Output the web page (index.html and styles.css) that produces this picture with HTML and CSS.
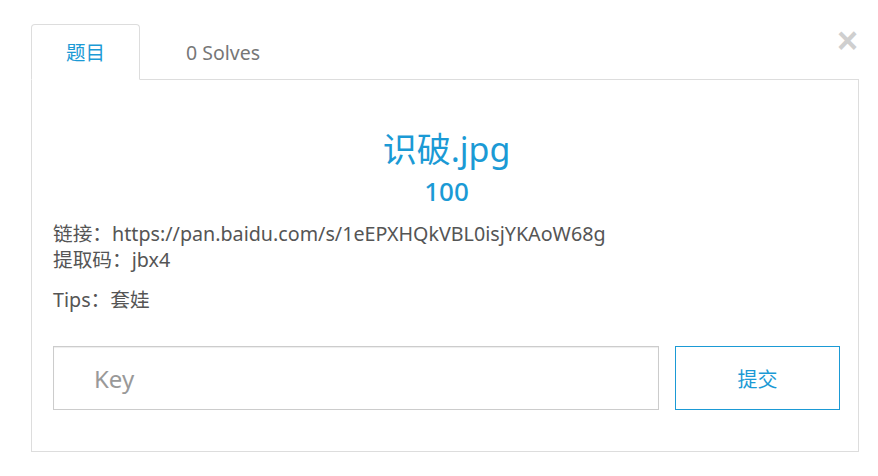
FILE: index.html
```html
<!DOCTYPE html>
<html lang="zh-CN">
<head>
    <meta charset="UTF-8">
    <title>识破.jpg</title>
    <link rel="stylesheet" href="styles.css">
</head>
<body>
    <div class="modal">
        <button class="close" type="button">&times;</button>

        <ul class="tabs">
            <li class="tab active">题目</li>
            <li class="tab">0 Solves</li>
        </ul>

        <div class="panel">
            <h2 class="chal-name">识破.jpg</h2>
            <h3 class="chal-value">100</h3>

            <div class="chal-desc">
                <p>链接：https://pan.baidu.com/s/1eEPXHQkVBL0isjYKAoW68g<br>提取码：jbx4</p>
                <p>Tips：套娃</p>
            </div>

            <div class="submit-row">
                <input class="key-input" type="text" placeholder="Key">
                <button class="submit-btn" type="button">提交</button>
            </div>
        </div>
    </div>
</body>
</html>
```

FILE: styles.css
```css
* {
    margin: 0;
    padding: 0;
    box-sizing: border-box;
}

body {
    font-family: "Noto Sans", "Noto Sans CJK SC", sans-serif;
    background-color: #fff;
    color: #555;
}

.modal {
    position: relative;
    width: 878px;
    padding: 24px 19px 0 31px;
}

.close {
    position: absolute;
    top: 23px;
    right: 20px;
    border: none;
    background: none;
    color: #cfcfcf;
    font-size: 36px;
    font-weight: bold;
    line-height: 1;
    font-family: "Liberation Sans", sans-serif;
    cursor: pointer;
}

.tabs {
    list-style: none;
    display: flex;
    margin-bottom: -1px;
}

.tab {
    height: 56px;
    padding: 0 34px;
    font-size: 19.5px;
    line-height: 56px;
    color: #777;
    border: 1px solid transparent;
    border-radius: 4px 4px 0 0;
}

.tab + .tab {
    padding-left: 45px;
}

.tab.active {
    color: #1b9ad5;
    background-color: #fff;
    border-color: #ddd #ddd #fff;
    position: relative;
}

.panel {
    height: 373px;
    border: 1px solid #ddd;
    padding: 46px 18px 0 21px;
}

.chal-name {
    font-size: 34px;
    font-weight: normal;
    color: #1b9ad5;
    text-align: center;
    line-height: 46px;
}

.chal-value {
    font-size: 26px;
    font-weight: 500;
    color: #1b9ad5;
    text-align: center;
    line-height: 34px;
    margin-top: 2px;
    margin-bottom: 13px;
}

.chal-desc p {
    font-size: 19.7px;
    line-height: 26px;
    color: #555;
    margin-bottom: 14px;
}

.submit-row {
    display: flex;
    gap: 16px;
    margin-top: 33px;
}

.key-input {
    width: 606px;
    height: 64px;
    border: 1px solid #ccc;
    box-shadow: inset 0 1px 1px rgba(0, 0, 0, 0.075);
    padding: 0 40px;
    font-size: 24px;
    font-family: "Noto Sans", sans-serif;
    color: #555;
    outline: none;
}

.key-input::placeholder {
    color: #999;
}

.submit-btn {
    width: 165px;
    height: 64px;
    border: 1px solid #1b9ad5;
    background-color: #fff;
    color: #1b9ad5;
    font-size: 20px;
    font-family: "Noto Sans CJK SC", sans-serif;
    cursor: pointer;
}
```
